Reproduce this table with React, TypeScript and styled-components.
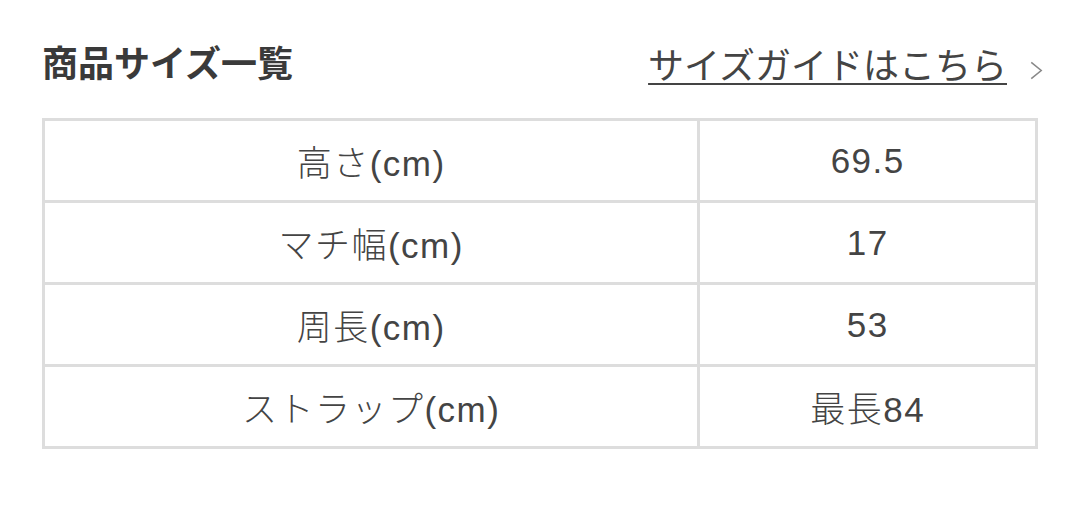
import { FC } from "react";
import styled, { createGlobalStyle } from "styled-components";

const GlobalStyle = createGlobalStyle`
  body {
    margin: 0;
    background: #fff;
    font-family: "Liberation Sans", "Noto Sans CJK JP", sans-serif;
    color: #333;
  }
`;

const rows = [
  { label: "高さ(cm)", value: "69.5" },
  { label: "マチ幅(cm)", value: "17" },
  { label: "周長(cm)", value: "53" },
  { label: "ストラップ(cm)", value: "最長84" },
];

const App: FC = () => {
  return (
    <>
      <GlobalStyle />
      <Wrapper>
        <Header>
          <Title>商品サイズ一覧</Title>
          <GuideLink href="#">
            <LinkText>サイズガイドはこちら</LinkText>
            <Chevron viewBox="0 0 14 20">
              <path d="M2 1.5 L12.5 10 L2 18.5" fill="none" stroke="#888" strokeWidth="1.6" />
            </Chevron>
          </GuideLink>
        </Header>
        <SizeTable>
          <tbody>
            {rows.map((r) => (
              <tr key={r.label}>
                <Cell wide>{r.label}</Cell>
                <Cell>{r.value}</Cell>
              </tr>
            ))}
          </tbody>
        </SizeTable>
      </Wrapper>
    </>
  );
};

export default App;

const Wrapper = styled.div`
  padding: 31px 42px 0 42px;
`;

const Header = styled.div`
  display: flex;
  align-items: center;
  justify-content: space-between;
  height: 60px;
  margin-bottom: 27px;
`;

const Title = styled.h2`
  margin: 0;
  font-size: 36px;
  font-weight: 700;
  color: #3a3a3a;
`;

const GuideLink = styled.a`
  display: flex;
  align-items: center;
  gap: 22px;
  margin-top: 4px;
  color: #444;
  text-decoration: none;
`;

const LinkText = styled.span`
  font-size: 36px;
  font-weight: 400;
  text-decoration: underline;
  text-decoration-thickness: 2px;
  text-underline-offset: 4px;
`;

const Chevron = styled.svg`
  width: 14px;
  height: 19px;
  margin-top: 14px;
  margin-right: -5px;
`;

const SizeTable = styled.table`
  width: 100%;
  border-collapse: collapse;
  border: 2px solid #ddd;
`;

const Cell = styled.td<{ wide?: boolean }>`
  width: ${(p) => (p.wide ? "66%" : "auto")};
  height: 79px;
  padding: 0;
  border: 3px solid #ddd;
  text-align: center;
  vertical-align: middle;
  font-size: 35px;
  font-weight: 300;
  letter-spacing: 1.5px;
  color: #444;
`;
